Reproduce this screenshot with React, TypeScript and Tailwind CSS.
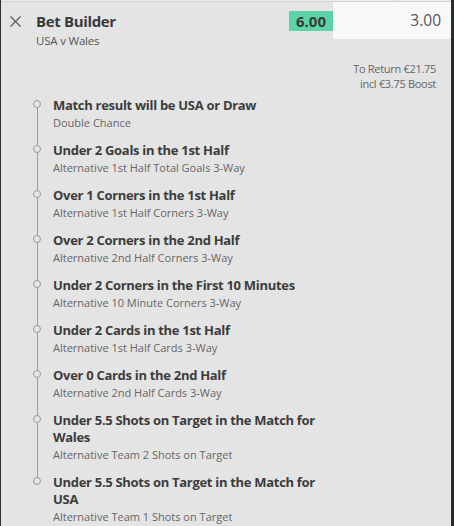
import React from "react";

const legs: { title: string; sub: string }[] = [
  { title: "Match result will be USA or Draw", sub: "Double Chance" },
  { title: "Under 2 Goals in the 1st Half", sub: "Alternative 1st Half Total Goals 3-Way" },
  { title: "Over 1 Corners in the 1st Half", sub: "Alternative 1st Half Corners 3-Way" },
  { title: "Over 2 Corners in the 2nd Half", sub: "Alternative 2nd Half Corners 3-Way" },
  { title: "Under 2 Corners in the First 10 Minutes", sub: "Alternative 10 Minute Corners 3-Way" },
  { title: "Under 2 Cards in the 1st Half", sub: "Alternative 1st Half Cards 3-Way" },
  { title: "Over 0 Cards in the 2nd Half", sub: "Alternative 2nd Half Cards 3-Way" },
  { title: "Under 5.5 Shots on Target in the Match for Wales", sub: "Alternative Team 2 Shots on Target" },
  { title: "Under 5.5 Shots on Target in the Match for USA", sub: "Alternative Team 1 Shots on Target" },
];

export default function App() {
  return (
    <div
      className="flex w-[454px] h-[526px] overflow-hidden bg-[#2b2b2b]"
      style={{ fontFamily: '"Open Sans", "Noto Sans", sans-serif' }}
    >
      <div className="w-px bg-[#2f2f2f]" />
      <div className="flex flex-col w-[450px] bg-[#e4e4e4]">
        {/* top band */}
        <div className="relative h-[3px] bg-[#ededed] border-b border-[#d2d2d2]">
          <div className="absolute left-[395px] top-0 h-[2px] w-px bg-[#cfcfcf]" />
        </div>
        {/* header */}
        <div className="flex">
          <div className="flex flex-1 pl-[9px]">
            <div className="pt-[14px] w-[26px]">
              <svg width="11" height="11" viewBox="0 0 11 11" fill="none">
                <path d="M0.5 0.5L10.5 10.5M10.5 0.5L0.5 10.5" stroke="#555" strokeWidth="1.1" />
              </svg>
            </div>
            <div className="flex flex-col pt-[9px]">
              <div className="text-[15px] leading-[20px] font-bold tracking-[-0.35px] text-[#3a3a3a]">Bet Builder</div>
              <div className="text-[11.5px] leading-[16px] mt-[2px] tracking-[-0.2px] text-[#555]">USA v Wales</div>
            </div>
          </div>
          <div className="mt-[9px] w-[44px] h-[20px] bg-[#5bd5a7] flex items-center justify-center text-[15px] font-bold text-[#3a3a3a]">
            6.00
          </div>
          <div className="w-[118px] h-[37px] bg-[#f8f8f8] flex items-center justify-end pr-[10px] text-[15.5px] text-[#555]">
            3.00
          </div>
        </div>
        {/* returns */}
        <div className="flex flex-col items-end pr-[15px] pt-[12px] text-[11px] leading-[15px] tracking-[-0.3px] text-[#666]">
          <div>To Return €21.75</div>
          <div>incl €3.75 Boost</div>
        </div>
        {/* legs */}
        <div className="flex flex-col gap-[10px] pt-[6px]">
          {legs.map((l, i) => (
            <div key={i} className="relative flex pl-[52px] pr-[110px]">
              <div className="absolute left-[32px] top-[2.5px] w-[8px] h-[8px] rounded-full border border-[#9a9a9a] bg-[#e4e4e4] z-10" />
              {i < legs.length - 1 && (
                <div className="absolute left-[35.5px] top-[6.5px] bottom-[-16.5px] w-px bg-[#9a9a9a]" />
              )}
              <div className="flex flex-col">
                <div className="text-[13px] leading-[17px] font-bold tracking-[-0.3px] text-[#3c3c3c]">{l.title}</div>
                <div className="text-[11px] leading-[18px] text-[#666]">{l.sub}</div>
              </div>
            </div>
          ))}
        </div>
      </div>
      <div className="flex-1 bg-[#2b2b2b]" />
    </div>
  );
}
